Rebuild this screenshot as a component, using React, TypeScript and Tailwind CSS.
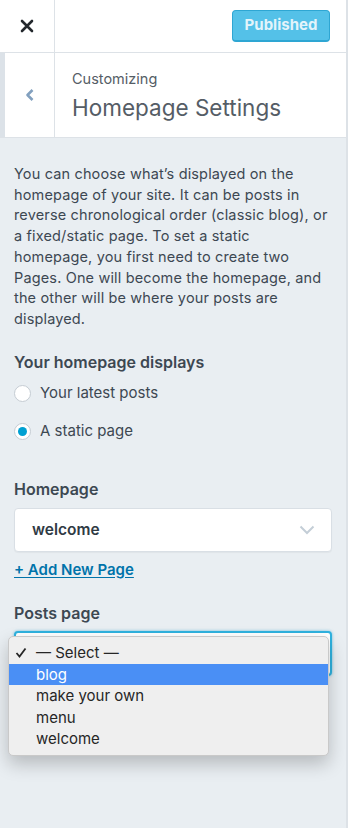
import React from 'react';

const descLines = [
  'You can choose what’s displayed on the',
  'homepage of your site. It can be posts in',
  'reverse chronological order (classic blog), or',
  'a fixed/static page. To set a static',
  'homepage, you first need to create two',
  'Pages. One will become the homepage, and',
  'the other will be where your posts are',
  'displayed.',
];

const options = ['blog', 'make your own', 'menu', 'welcome'];

const Radio = ({ checked, label }: { checked?: boolean; label: string }) => (
  <label className="flex items-center gap-[9px] h-[20px]">
    <span className="w-[17px] h-[17px] rounded-full bg-white border border-[#c5ccd3] flex items-center justify-center">
      {checked && <span className="w-[9px] h-[9px] rounded-full bg-[#00a0d2]" />}
    </span>
    <span className="text-[15px] text-[#3d4852]">{label}</span>
  </label>
);

export default function App() {
  return (
    <div
      className="relative w-[348px] h-[828px] overflow-hidden bg-[#e9eef2] border-r-2 border-[#dde2e7]"
      style={{ fontFamily: 'Inter, "Liberation Sans", sans-serif' }}
    >
      {/* top bar */}
      <div className="flex h-[53px] bg-white border-b border-[#dde2e7]">
        <div className="w-[55px] border-r border-[#dde2e7] flex items-center justify-center">
          <svg width="14" height="14" viewBox="0 0 14 14">
            <path d="M2 2 L12 12 M12 2 L2 12" stroke="#23282d" strokeWidth="2.6" strokeLinecap="round" />
          </svg>
        </div>
        <div className="flex-1 flex items-center justify-end pr-[16px] pb-[1px]">
          <button className="w-[98px] h-[32px] rounded-[4px] bg-[#54c1e8] border border-[#2ea6d3] border-b-2 text-[15px] font-bold text-[#e3f4fb]">
            Published
          </button>
        </div>
      </div>

      {/* section title */}
      <div className="flex h-[85px] bg-white border-b border-[#dde2e7]">
        <div className="w-[5px] bg-[#dce2e8]" />
        <div className="w-[50px] border-r border-[#dde2e7] flex items-center justify-center">
          <svg width="10" height="14" viewBox="0 0 10 14">
            <path d="M7.5 2 L2.5 7 L7.5 12" fill="none" stroke="#82a0bf" strokeWidth="2.6" strokeLinejoin="round" />
          </svg>
        </div>
        <div className="flex flex-col pl-[17px] pt-[17px]">
          <span className="text-[14.5px] text-[#555d66] leading-[18px]">Customizing</span>
          <span className="text-[22.5px] text-[#555d66] leading-[30px] mt-[5px]">Homepage Settings</span>
        </div>
      </div>

      {/* body */}
      <div className="px-[14px] pt-[26px] text-[#3d4852]">
        <p className="text-[14.5px] tracking-[0.01em] leading-[20.7px]">
          {descLines.map((l) => (
            <span key={l} className="block whitespace-nowrap">{l}</span>
          ))}
        </p>

        <h3 className="mt-[22px] text-[16px] font-semibold leading-[20px]">Your homepage displays</h3>
        <div className="mt-[12px] flex flex-col gap-[18px]">
          <Radio label="Your latest posts" />
          <Radio checked label="A static page" />
        </div>

        <h3 className="mt-[37px] text-[16px] font-semibold leading-[20px]">Homepage</h3>
        <div className="mt-[9px] h-[44px] bg-white border border-[#d9dfe5] rounded-[4px] shadow-[0_1px_1px_rgba(0,0,0,0.04)] flex items-center justify-between pl-[17px] pr-[16px]">
          <span className="text-[15.5px] font-semibold text-[#2f3a44]">welcome</span>
          <svg width="16" height="10" viewBox="0 0 16 10">
            <path d="M1.5 1.5 L8 8 L14.5 1.5" fill="none" stroke="#c4ced7" strokeWidth="2" />
          </svg>
        </div>
        <a className="block mt-[8px] text-[15px] font-semibold text-[#0073aa] underline underline-offset-2 leading-[20px]">
          + Add New Page
        </a>

        <h3 className="mt-[23px] text-[16px] font-semibold leading-[20px]">Posts page</h3>
        <div className="mt-[8px] h-[45px] bg-white border-2 border-[#2fb2df] rounded-[4px] shadow-[0_0_3px_rgba(30,160,210,0.6)]" />
      </div>

      {/* native dropdown menu */}
      <div className="absolute left-[8px] top-[636px] w-[321px] rounded-[5px] bg-[#efefef] border border-[#c9c9c9] shadow-[0_8px_18px_rgba(0,0,0,0.22)] py-[5px] text-[15px] text-[#262626] leading-[21.5px]">
        <div className="flex items-center">
          <span className="w-[27px] flex justify-start pl-[6px]">
            <svg width="12" height="11" viewBox="0 0 12 11">
              <path d="M1.5 6 L4.5 9.5 L10.5 1.5" fill="none" stroke="#262626" strokeWidth="1.8" />
            </svg>
          </span>
          <span>— Select —</span>
        </div>
        {options.map((o, i) => (
          <div key={o} className={`pl-[27px] ${i === 0 ? 'bg-[#4a8ff5] text-white' : ''}`}>
            {o}
          </div>
        ))}
      </div>
    </div>
  );
}
